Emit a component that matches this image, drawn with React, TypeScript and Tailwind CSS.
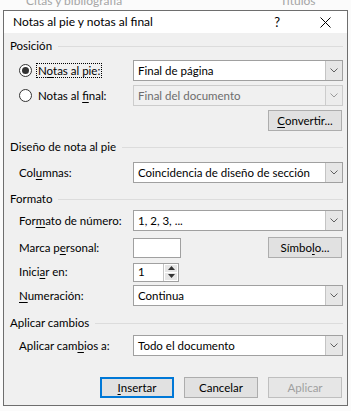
import React from "react";

const Chevron = ({ color = "#606060" }: { color?: string }) => (
  <svg width="8" height="5" viewBox="0 0 8 5">
    <path d="M0.5 0.5 L4 4 L7.5 0.5" fill="none" stroke={color} strokeWidth="1" />
  </svg>
);

function Select({ value, disabled }: { value: string; disabled?: boolean }) {
  return (
    <div
      className={`flex h-[21px] flex-1 border ${
        disabled ? "border-[#cccccc] bg-[#f0f0f0] text-[#6d6d6d]" : "border-[#a0a0a0] bg-white text-black"
      }`}
    >
      <div className="flex flex-1 items-center whitespace-nowrap pl-[4px] leading-none">{value}</div>
      <div
        className={`flex w-[17px] items-center justify-center border-l ${
          disabled ? "border-[#cccccc] bg-[#ececec]" : "border-[#c4c4c4] bg-[#e6e6e6]"
        }`}
      >
        <Chevron color={disabled ? "#9a9a9a" : "#606060"} />
      </div>
    </div>
  );
}

function Btn({
  children,
  primary,
  disabled,
  className = "",
}: {
  children: React.ReactNode;
  primary?: boolean;
  disabled?: boolean;
  className?: string;
}) {
  return (
    <div
      className={`flex h-[21px] w-[74px] items-center justify-center whitespace-nowrap leading-none ${
        primary
          ? "border-2 border-[#0078d7] bg-[#e1e1e1]"
          : disabled
          ? "border border-[#bfbfbf] bg-[#e6e6e6] text-[#a0a0a0]"
          : "border border-[#adadad] bg-[#e1e1e1]"
      } ${className}`}
    >
      {children}
    </div>
  );
}

const U = ({ children }: { children: React.ReactNode }) => <span className="underline underline-offset-2">{children}</span>;

function Header({ title, className = "" }: { title: string; className?: string }) {
  return (
    <div className={`flex h-[14px] items-center pl-[6px] ${className}`}>
      <span className="whitespace-nowrap leading-none">{title}</span>
      <div className="ml-[6px] h-px flex-1 bg-[#dcdcdc]" />
    </div>
  );
}

function Row({ label, children, className = "" }: { label: React.ReactNode; children: React.ReactNode; className?: string }) {
  return (
    <div className={`flex h-[21px] items-center ${className}`}>
      <div className="w-[129px] whitespace-nowrap pl-[15px] leading-none">{label}</div>
      {children}
    </div>
  );
}

function Radio({ checked }: { checked?: boolean }) {
  return (
    <div className="flex h-[13px] w-[13px] shrink-0 items-center justify-center rounded-full border border-[#333333] bg-white">
      {checked && <div className="h-[7px] w-[7px] rounded-full bg-[#333333]" />}
    </div>
  );
}

export default function App() {
  return (
    <div className="relative h-[411px] w-[351px] overflow-hidden bg-[#fbfbfb] font-['Lato',sans-serif] text-[11.5px] text-black">
      {/* background behind dialog */}
      <div className="h-[10px] overflow-hidden text-[12px] leading-[12px] text-[#a5a5a5]">
        <div className="-mt-[5px] flex">
          <span className="ml-[26px]">Citas y bibliografía</span>
          <span className="ml-[158px]">Títulos</span>
        </div>
      </div>
      <div className="ml-[3px] flex h-[396px] w-[345px] flex-col border border-[#6e6e6e] bg-[#f0f0f0]">
        {/* title bar */}
        <div className="flex h-[22px] items-center bg-white pl-[9px]">
          <span className="flex-1 whitespace-nowrap text-[12px] leading-none">Notas al pie y notas al final</span>
          <span className="mr-[40px] text-[13px] leading-none">?</span>
          <svg width="11" height="11" viewBox="0 0 11 11" className="mr-[16px]">
            <path d="M0.5 0.5 L10.5 10.5 M10.5 0.5 L0.5 10.5" stroke="#000" strokeWidth="1" />
          </svg>
        </div>
        {/* body */}
        <div className="flex flex-1 flex-col pr-[4px]">
          <Header title="Posición" className="mt-[6px]" />
          <div className="mt-[7px] flex h-[21px] items-center">
            <div className="flex w-[129px] items-center pl-[15px]">
              <Radio checked />
              <span className="ml-[4px] whitespace-nowrap border border-dotted border-black px-px leading-[13px]">
                N<U>o</U>tas al pie:
              </span>
            </div>
            <Select value="Final de página" />
          </div>
          <div className="mt-[4px] flex h-[21px] items-center">
            <div className="flex w-[129px] items-center pl-[15px]">
              <Radio />
              <span className="ml-[6px] whitespace-nowrap leading-none">
                Notas al <U>f</U>inal:
              </span>
            </div>
            <Select value="Final del documento" disabled />
          </div>
          <div className="mt-[4px] flex justify-end pr-[1px]">
            <Btn>
              <U>C</U>onvertir...
            </Btn>
          </div>

          <Header title="Diseño de nota al pie" className="mt-[9px]" />
          <Row
            className="mt-[8px]"
            label={
              <>
                Col<U>u</U>mnas:
              </>
            }
          >
            <Select value="Coincidencia de diseño de sección" />
          </Row>

          <Header title="Formato" className="mt-[9px]" />
          <Row
            className="mt-[4px]"
            label={
              <>
                For<U>m</U>ato de número:
              </>
            }
          >
            <Select value="1, 2, 3, ..." />
          </Row>
          <Row
            className="mt-[6px]"
            label={
              <>
                Marca p<U>e</U>rsonal:
              </>
            }
          >
            <div className="h-[20px] w-[48px] border border-[#a0a0a0] bg-white" />
            <div className="flex-1" />
            <Btn className="mr-[1px]">
              Símbo<U>l</U>o...
            </Btn>
          </Row>
          <div className="mt-[5px] flex h-[18px] items-center">
            <div className="w-[129px] whitespace-nowrap pl-[15px] leading-none">
              Inici<U>a</U>r en:
            </div>
            <div className="flex h-[19px] w-[46px] border border-[#a0a0a0] bg-white">
              <div className="flex flex-1 items-center pl-[4px] leading-none">1</div>
              <div className="flex w-[15px] flex-col gap-px border-l border-[#c4c4c4] bg-white p-px">
                <div className="flex flex-1 items-center justify-center bg-[#e6e6e6]">
                  <svg width="7" height="4" viewBox="0 0 7 4">
                    <path d="M0 4 L3.5 0 L7 4 Z" fill="#333" />
                  </svg>
                </div>
                <div className="flex flex-1 items-center justify-center bg-[#e6e6e6]">
                  <svg width="7" height="4" viewBox="0 0 7 4">
                    <path d="M0 0 L3.5 4 L7 0 Z" fill="#333" />
                  </svg>
                </div>
              </div>
            </div>
          </div>
          <Row
            className="mt-[4px]"
            label={
              <>
                <U>N</U>umeración:
              </>
            }
          >
            <Select value="Continua" />
          </Row>

          <Header title="Aplicar cambios" className="mt-[10px]" />
          <Row
            className="mt-[5px]"
            label={
              <>
                Aplicar cam<U>b</U>ios a:
              </>
            }
          >
            <Select value="Todo el documento" />
          </Row>

          <div className="mt-[21px] flex justify-end gap-[10px] pr-[1px]">
            <Btn primary>
              <U>I</U>nsertar
            </Btn>
            <Btn>Cancelar</Btn>
            <Btn disabled>Aplicar</Btn>
          </div>
        </div>
      </div>
    </div>
  );
}
